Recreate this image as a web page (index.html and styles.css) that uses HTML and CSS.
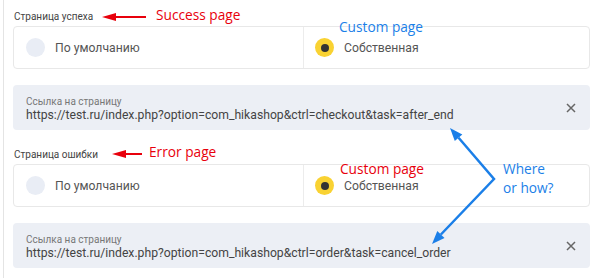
FILE: index.html
```
<!DOCTYPE html>
<html>

<head>
    <title>Страницы оплаты</title>
    <link rel="stylesheet" href="styles.css">
</head>

<body>
    <div class="panel">
        <section class="field">
            <div class="field-label">Страница успеха</div>
            <div class="choice">
                <div class="option"><span class="radio"></span>По умолчанию</div>
                <div class="option active"><span class="radio"></span>Собственная</div>
            </div>
            <div class="link-box">
                <div class="link-text">
                    <div class="link-label">Ссылка на страницу</div>
                    <div class="link-url">https://test.ru/index.php?option=com_hikashop&amp;ctrl=checkout&amp;task=after_end</div>
                </div>
                <svg class="link-clear" width="10" height="10" viewBox="0 0 10 10">
                    <path d="M1 1 L9 9 M9 1 L1 9" />
                </svg>
            </div>
        </section>

        <section class="field">
            <div class="field-label">Страница ошибки</div>
            <div class="choice">
                <div class="option"><span class="radio"></span>По умолчанию</div>
                <div class="option active"><span class="radio"></span>Собственная</div>
            </div>
            <div class="link-box">
                <div class="link-text">
                    <div class="link-label">Ссылка на страницу</div>
                    <div class="link-url">https://test.ru/index.php?option=com_hikashop&amp;ctrl=order&amp;task=cancel_order</div>
                </div>
                <svg class="link-clear" width="10" height="10" viewBox="0 0 10 10">
                    <path d="M1 1 L9 9 M9 1 L1 9" />
                </svg>
            </div>
        </section>

        <!-- annotations drawn over the form -->
        <svg class="notes" width="597" height="278" viewBox="0 0 597 278">
            <g class="red">
                <line x1="146" y1="17" x2="114" y2="17" />
                <polygon points="102,17 116,13 116,21" />
                <line x1="142" y1="154" x2="124" y2="154" />
                <polygon points="112,154 126,150 126,158" />
            </g>
            <g class="blue">
                <polyline points="458.6,137.8 494,179 440.9,234.5" />
                <polygon points="450,128 462.3,134.5 454.8,141.1" />
                <polygon points="432,244 444.5,237.9 437.3,231.1" />
            </g>
        </svg>
        <span class="note note-red" style="left: 156px; top: 7px;">Success page</span>
        <span class="note note-blue" style="left: 339px; top: 19px;">Custom page</span>
        <span class="note note-red" style="left: 149px; top: 144px;">Error page</span>
        <span class="note note-red" style="left: 340px; top: 161px;">Custom page</span>
        <span class="note note-blue" style="left: 503px; top: 161px;">Where</span>
        <span class="note note-blue" style="left: 503px; top: 180px;">or how?</span>
    </div>
</body>

</html>
```

FILE: styles.css
```
body {
    margin: 0;
    padding: 0;
    font-family: Roboto, "Liberation Sans", sans-serif;
    background-color: #ffffff;
}

.panel {
    position: relative;
    width: 577px;
    height: 268px;
    margin-left: 3px;
    padding: 10px 7px 0 9px;
    border-left: 1px solid #e4e4e4;
    display: flex;
    flex-direction: column;
    gap: 18px;
}

.field-label {
    font-size: 10px;
    line-height: 14px;
    color: #444;
    padding-left: 1px;
    margin-bottom: 2px;
}

.choice {
    display: grid;
    grid-template-columns: 289px 1fr;
    height: 41px;
    border: 1px solid #e8e8e8;
    border-radius: 4px;
}

.option {
    display: flex;
    align-items: center;
    gap: 10px;
    padding-left: 12px;
    font-size: 12.2px;
    color: #555;
}

.option + .option {
    border-left: 1px solid #ececec;
    padding-left: 11px;
}

.radio {
    width: 19px;
    height: 19px;
    border-radius: 50%;
    background-color: #e9edf5;
    display: flex;
    align-items: center;
    justify-content: center;
}

.option.active .radio {
    background-color: #f9d232;
}

.option.active .radio::after {
    content: "";
    width: 8px;
    height: 8px;
    border-radius: 50%;
    background-color: #333;
}

.link-box {
    margin-top: 16px;
    height: 45px;
    box-sizing: border-box;
    padding: 10px 14px 0 13px;
    background-color: #eceff5;
    border-radius: 4px;
    display: flex;
    justify-content: space-between;
}

.link-label {
    font-size: 10px;
    line-height: 13px;
    color: #777;
}

.link-url {
    font-size: 12.2px;
    line-height: 14px;
    color: #444;
}

.link-clear {
    margin-top: 8px;
    fill: none;
    stroke: #666;
    stroke-width: 1.5;
}

.notes {
    position: absolute;
    left: -4px;
    top: 0;
    pointer-events: none;
}

.notes .red line {
    stroke: #e8000c;
    stroke-width: 2;
}

.notes .red polygon {
    fill: #e8000c;
}

.notes .blue polyline {
    fill: none;
    stroke: #1b7fe8;
    stroke-width: 2.5;
}

.notes .blue polygon {
    fill: #1b7fe8;
}

.note {
    position: absolute;
    font-family: "Open Sans", Lato, sans-serif;
    font-size: 13.7px;
    line-height: 16px;
    white-space: nowrap;
    margin-left: -4px;
}

.note-red {
    color: #e8000c;
}

.note-blue {
    color: #1b7fe8;
}
```
